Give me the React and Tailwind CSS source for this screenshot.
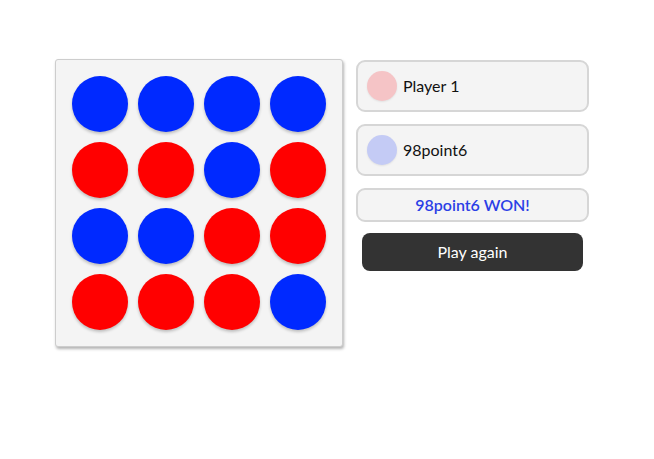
import React from "react";

const board = [
  ["b", "b", "b", "b"],
  ["r", "r", "b", "r"],
  ["b", "b", "r", "r"],
  ["r", "r", "r", "b"],
];

function Disc({ color }) {
  return (
    <div
      className={
        "w-[56px] h-[56px] rounded-full shadow-[0_2px_3px_rgba(0,0,0,0.22)] " +
        (color === "r" ? "bg-[#ff0000]" : "bg-[#0029ff]")
      }
    />
  );
}

function PlayerCard({ name, dot }) {
  return (
    <div className="h-[52px] flex items-center gap-[6px] pl-[9px] bg-[#f4f4f4] border-2 border-[#d6d6d6] rounded-[9px]">
      <div className={"w-[30px] h-[30px] rounded-full shadow-[0_1px_2px_rgba(0,0,0,0.08)] " + dot} />
      <span className="text-[16px] text-[#111]">{name}</span>
    </div>
  );
}

export default function App() {
  return (
    <div
      className="min-h-screen bg-white pt-[59px] pl-[55px] flex items-start gap-[13px]"
      style={{ fontFamily: "Lato, 'Open Sans', sans-serif" }}
    >
      <div className="w-[288px] border border-[#cdcdcd] rounded-[3px] bg-[#f4f4f4] shadow-[1px_2px_3px_rgba(0,0,0,0.3)] p-[16px]">
        <div className="grid grid-cols-4 gap-[10px]">
          {board.flat().map((c, i) => (
            <Disc key={i} color={c} />
          ))}
        </div>
      </div>
      <div className="w-[233px] mt-[1px] flex flex-col">
        <PlayerCard name="Player 1" dot="bg-[#f5c4c6]" />
        <div className="h-[12px]" />
        <PlayerCard name="98point6" dot="bg-[#c4cbf5]" />
        <div className="h-[12px]" />
        <div className="h-[34px] flex items-center justify-center bg-[#f4f4f4] border-2 border-[#d6d6d6] rounded-[9px]">
          <span className="text-[16px] font-semibold text-[#2b3fe6]">98point6 WON!</span>
        </div>
        <div className="h-[11px]" />
        <button className="mx-[6px] h-[38px] rounded-[8px] bg-[#333333] text-white text-[16px]">
          Play again
        </button>
      </div>
    </div>
  );
}
